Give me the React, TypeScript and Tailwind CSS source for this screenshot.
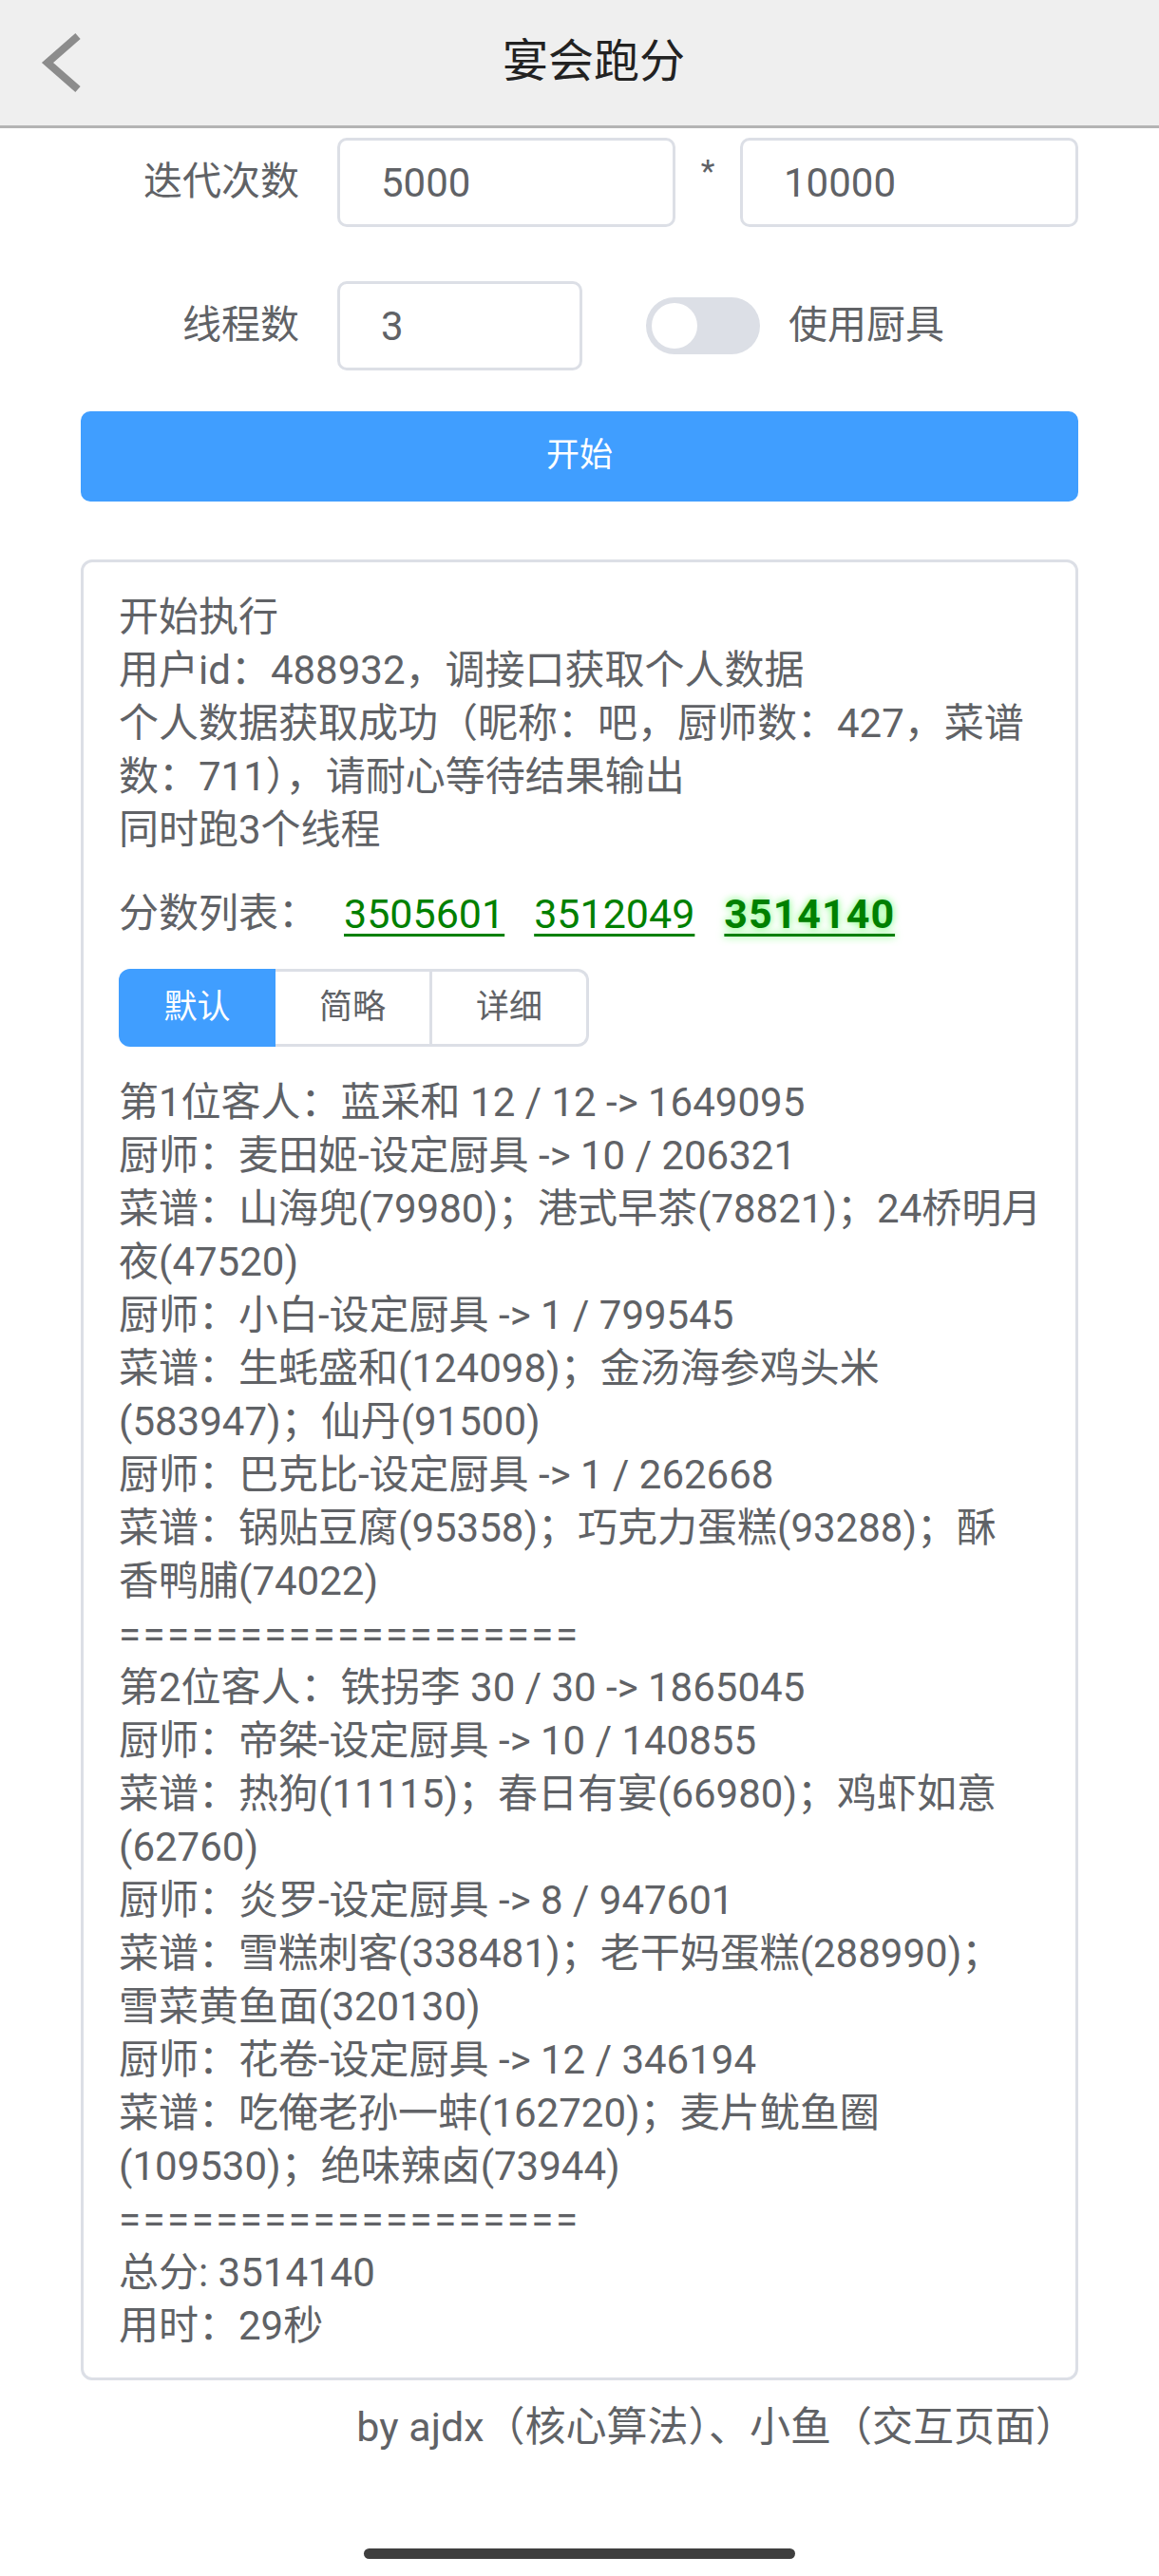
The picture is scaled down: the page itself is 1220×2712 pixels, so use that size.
import { useState } from "react";

// ── 宴会跑分 ─────────────────────────────────────────────────────────
// Mobile page: header bar, form (iterations / threads / tool switch),
// start button and the log card with the score list and result tabs.

const introLines = [
  "开始执行",
  "用户id：488932，调接口获取个人数据",
  "个人数据获取成功（昵称：吧，厨师数：427，菜谱",
  "数：711），请耐心等待结果输出",
  "同时跑3个线程",
];

const resultLines = [
  "第1位客人：蓝采和 12 / 12 -> 1649095",
  "厨师：麦田姬-设定厨具 -> 10 / 206321",
  "菜谱：山海兜(79980)；港式早茶(78821)；24桥明月",
  "夜(47520)",
  "厨师：小白-设定厨具 -> 1 / 799545",
  "菜谱：生蚝盛和(124098)；金汤海参鸡头米",
  "(583947)；仙丹(91500)",
  "厨师：巴克比-设定厨具 -> 1 / 262668",
  "菜谱：锅贴豆腐(95358)；巧克力蛋糕(93288)；酥",
  "香鸭脯(74022)",
  "===================",
  "第2位客人：铁拐李 30 / 30 -> 1865045",
  "厨师：帝桀-设定厨具 -> 10 / 140855",
  "菜谱：热狗(11115)；春日有宴(66980)；鸡虾如意",
  "(62760)",
  "厨师：炎罗-设定厨具 -> 8 / 947601",
  "菜谱：雪糕刺客(338481)；老干妈蛋糕(288990)；",
  "雪菜黄鱼面(320130)",
  "厨师：花卷-设定厨具 -> 12 / 346194",
  "菜谱：吃俺老孙一蚌(162720)；麦片鱿鱼圈",
  "(109530)；绝味辣卤(73944)",
  "===================",
  "总分: 3514140",
  "用时：29秒",
];

const scores = ["3505601", "3512049", "3514140"];
const tabs = ["默认", "简略", "详细"];

export default function App() {
  const [useTools, setUseTools] = useState(false);
  const [activeTab, setActiveTab] = useState(0);

  return (
    <div className="min-h-[2712px] bg-white font-['Roboto','Noto_Sans_CJK_SC',sans-serif] text-[#606266]">
      {/* Header */}
      <div className="grid h-[135px] grid-cols-[1fr_auto_1fr] items-center border-b-[3px] border-[#b4b4b4] bg-[#efefef]">
        <svg className="ml-[42px] h-[64px] w-[46px]" viewBox="0 0 46 64" fill="none">
          <path d="M40 4 L8 32 L40 60" stroke="#8c8c8c" strokeWidth="8" strokeLinejoin="miter" />
        </svg>
        <h1 className="ml-[30px] pb-[2px] text-[48px] leading-none text-[#222]">宴会跑分</h1>
        <div />
      </div>

      <div className="px-[85px]">
        {/* Iterations */}
        <div className="mt-[10px] flex items-center">
          <label className="w-[232px] pr-[2px] text-right text-[41px]">迭代次数</label>
          <input
            readOnly
            value="5000"
            className="ml-[38px] h-[94px] w-[356px] rounded-[10px] border-[3px] border-[#dcdfe6] pl-[43px] text-[42px] text-[#606266] outline-none"
          />
          <span className="w-[68px] -translate-y-[12px] text-center text-[34px]">*</span>
          <input
            readOnly
            value="10000"
            className="h-[94px] w-[356px] rounded-[10px] border-[3px] border-[#dcdfe6] pl-[43px] text-[42px] text-[#606266] outline-none"
          />
        </div>

        {/* Threads + tool switch */}
        <div className="mt-[57px] flex items-center">
          <label className="w-[232px] pr-[2px] text-right text-[41px]">线程数</label>
          <input
            readOnly
            value="3"
            className="ml-[38px] h-[94px] w-[258px] rounded-[10px] border-[3px] border-[#dcdfe6] pl-[43px] text-[42px] text-[#606266] outline-none"
          />
          <button
            type="button"
            onClick={() => setUseTools((v) => !v)}
            className={`ml-[67px] flex h-[60px] w-[120px] items-center rounded-full px-[6px] ${
              useTools ? "justify-end bg-[#409eff]" : "justify-start bg-[#dcdfe6]"
            }`}
          >
            <span className="h-[48px] w-[48px] rounded-full bg-white" />
          </button>
          <span className="ml-[30px] text-[41px]">使用厨具</span>
        </div>

        {/* Start */}
        <button
          type="button"
          className="mt-[43px] flex h-[95px] w-full items-center justify-center rounded-[10px] bg-[#409eff] text-[35px] text-white"
        >
          开始
        </button>

        {/* Log card */}
        <div className="mt-[61px] rounded-[12px] border-[3px] border-[#dcdfe6] px-[37px] pt-[30px] pb-[26px] text-[42px] leading-[56px]">
          {introLines.map((line, i) => (
            <div key={i} className="whitespace-nowrap">
              {line}
            </div>
          ))}

          <div className="mt-[32px] flex items-center whitespace-nowrap">
            <span>分数列表：</span>
            {scores.map((s, i) => (
              <a
                key={s}
                className={`text-[43px] text-[#008000] underline decoration-[3px] underline-offset-[6px] ${
                  i === 0 ? "ml-[27px]" : "ml-[31px]"
                } ${
                  i === scores.length - 1
                    ? "font-bold tracking-[1px] [text-shadow:0_0_8px_#6cff6c]"
                    : ""
                }`}
              >
                {s}
              </a>
            ))}
          </div>

          <div className="mt-[30px] flex h-[82px] w-fit">
            {tabs.map((t, i) => (
              <button
                key={t}
                type="button"
                onClick={() => setActiveTab(i)}
                className={`flex w-[165px] items-center justify-center text-[35px] ${
                  i === 0 ? "rounded-l-[12px]" : ""
                } ${i === tabs.length - 1 ? "rounded-r-[12px]" : ""} ${
                  activeTab === i
                    ? "bg-[#409eff] text-white"
                    : "border-y-[3px] border-r-[3px] border-[#dcdfe6] bg-white text-[#606266]"
                }`}
              >
                {t}
              </button>
            ))}
          </div>

          <div className="mt-[31px]">
            {resultLines.map((line, i) => (
              <div
                key={i}
                className={`whitespace-nowrap ${line.startsWith("=") ? "tracking-[2.5px]" : ""}`}
              >
                {line}
              </div>
            ))}
          </div>
        </div>

        {/* Footer */}
        <p className="mt-[21px] pr-[2px] text-right text-[43px] leading-[56px]">
          by ajdx（核心算法）、小鱼（交互页面）
        </p>
      </div>

      {/* Home indicator */}
      <div className="mt-[100px] flex justify-center">
        <div className="h-[11px] w-[454px] rounded-full bg-[#3f3f3f]" />
      </div>
    </div>
  );
}
